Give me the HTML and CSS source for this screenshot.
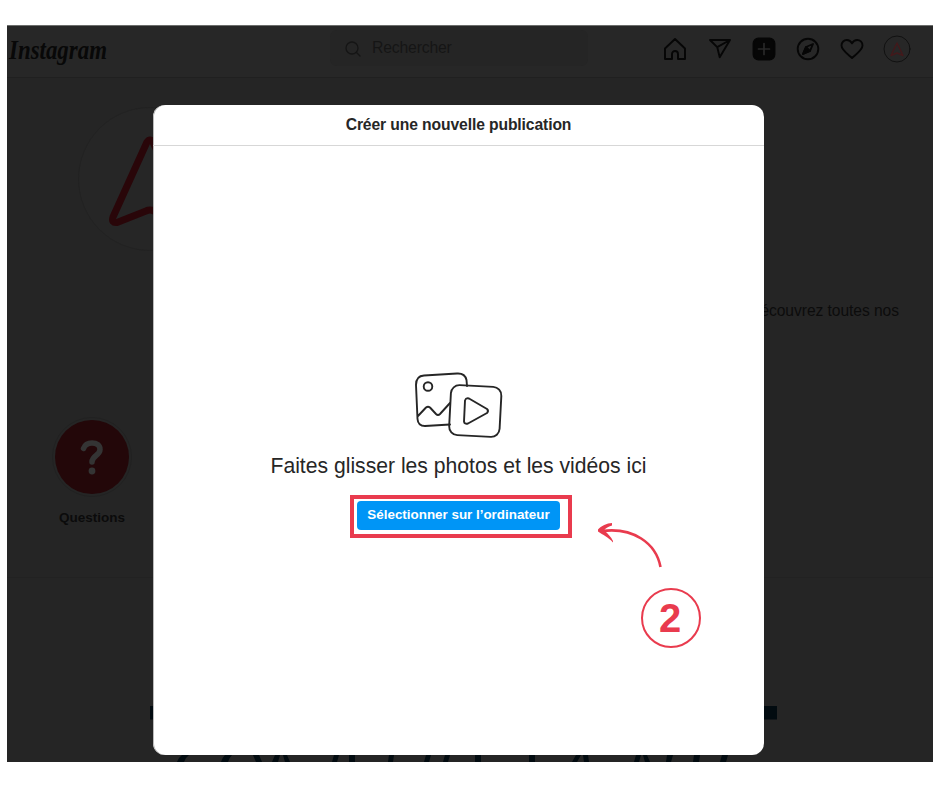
FILE: index.html
```html
<!DOCTYPE html>
<html lang="fr">
<head>
<meta charset="utf-8">
<title>Instagram</title>
<link rel="stylesheet" href="styles.css">
</head>
<body>
<div class="window">
  <header class="nav">
    <svg class="logo" width="102" height="38" viewBox="0 0 102 38"><text x="2" y="26" textLength="98" lengthAdjust="spacingAndGlyphs">Instagram</text></svg>
    <div class="search">
      <svg width="16" height="16" viewBox="0 0 16 16"><circle cx="7" cy="7" r="6"/><path d="M11.5 11.5 15 15"/></svg>
      <span>Rechercher</span>
    </div>
    <nav class="icons">
      <svg viewBox="0 0 24 24"><path d="M9 22v-5c0-1.700 1.300-3 3-3s3 1.300 3 3v5h7V11.500L12 2 2 11.500V22z"/></svg>
      <svg viewBox="0 0 24 24"><path d="M22 3 9.200 10.100M11.700 20.300 22 3H2l7.200 7.100z"/></svg>
      <svg viewBox="0 0 24 24"><rect class="fill" x="1.500" y="1.500" width="21" height="21" rx="5"/><path class="plus" d="M6.500 12h11M12 6.500v11"/></svg>
      <svg viewBox="0 0 24 24"><circle cx="12" cy="12" r="10.300"/><path d="m17 7-3 7-7 3 3-7z"/><path class="fill" d="m10 10 4 4-7 3z"/></svg>
      <svg viewBox="0 0 24 24"><path d="M12 21C9 18 1.500 13.500 1.500 8.600 1.500 5.200 4 3 6.900 3 9.500 3 11 4.500 12 6.300 13 4.500 14.500 3 17.100 3 20 3 22.500 5.200 22.500 8.600 22.500 13.500 15 18 12 21z"/></svg>
      <svg class="avatar" viewBox="0 0 28 28"><circle cx="14" cy="14" r="13"/><path d="m14 8 6 12.500-6-2.500-6 2.500z"/></svg>
    </nav>
  </header>
  <main class="profile">
    <svg class="portrait" width="144" height="144" viewBox="0 0 144 144"><circle cx="72" cy="72" r="71.500"/><path d="M69 35Q72 31 75 35L109 111Q110 117 104 116L76 104Q72 102 68 104L39 115.500Q33 116 35 110Z"/></svg>
    <p class="bio">écouvrez toutes nos</p>
    <div class="story">
      <div class="ring"><div class="disc"><svg width="24" height="36" viewBox="0 0 24 36"><path d="M3.500 9.500C5 5.500 8 4 12 4c5 0 8 2.500 8 6.500 0 6-8 6-8 12.500"/><circle cx="12" cy="32" r="3.400"/></svg></div></div>
      <span>Questions</span>
    </div>
    <div class="posts">
      <svg width="926" height="134" viewBox="7 628 926 134"><path d="M150 706h627v13.500H150zM182 755h7q-4 3-5 7h-7q1-4 5-7zM225 755h7q-3 3-4 7h-7q1-4 4-7zM253 755h6l3 7h-6zM275 755h5l-2 7h-6zM283 755h4l3 7h-5zM334 755h5l-2 7h-5zM349 755h6v7h-6zM389 755h5l-1 7h-5zM426 755h5l-2 7h-5zM445 755h5l-2 7h-5zM475 755h6v7h-6zM529 755h6v7h-6zM576 755h5l-4 7h-5zM583 755h5l1 7h-5zM636 755h5l-2 7h-5zM643 755h4l3 7h-5zM667 755h6l-2 7h-5zM694 755h6l-1 7h-6zM722 755h6l-2 7h-6z"/></svg>
    </div>
  </main>
  <section class="modal">
    <h1>Créer une nouvelle publication</h1>
    <div class="drop">
      <svg class="media" width="88" height="68" viewBox="0 0 88 68"><path d="M35 52.500 10 54Q3 54 2.500 47L1 13Q1 4 9 3.500L42 1.500Q50 1 51.500 8L52 14M3 44l8-8.500q2-1.500 4 0l6 6.500q2 2 4 0L35 31"/><circle cx="13" cy="14.500" r="4.300"/><rect x="35" y="14" width="50.500" height="50" rx="8.500" transform="rotate(3 60 39)"/><path d="M50 28.500Q51 25.500 54 26.500L72 37Q74 39 72 41L53 51.500Q49.500 52.500 49 49.500Z"/></svg>
      <h2>Faites glisser les photos et les vidéos ici</h2>
      <div class="frame"><button>Sélectionner sur l’ordinateur</button></div>
    </div>
    <svg class="arrow" width="70" height="50" viewBox="595 520 70 50"><path class="shaft" d="M602 531C633 527 656 543 660.500 567"/><path class="head" d="M598 529.500C601 526 607 523 612 523V525.500C608 526.500 605 528.500 604 530.500C608 533.500 611 537 613 541V542.500C608 537 603 535 598 531.500Z"/></svg>
    <div class="step">2</div>
  </section>
</div>
</body>
</html>
```
FILE: styles.css
```css
* { box-sizing: border-box; }
body { margin: 0; background: #fff; font-family: "Liberation Sans", Arial, sans-serif; }
.window { position: relative; width: 926px; height: 737px; margin: 25px 0 0 7px; background: #252525; overflow: hidden; border-top: 1px solid #6b6d6b; }
svg { fill: none; stroke-linecap: round; stroke-linejoin: round; flex: none; }
.nav { display: flex; height: 52px; background: #272727; border-bottom: 1px solid #202020; }
.logo { margin-top: 7px; overflow: visible; }
.logo text { font: italic bold 28px "Liberation Serif", serif; fill: #080808; }
.search { display: flex; align-items: center; gap: 11px; width: 258px; height: 36px; margin: 4px 0 0 221px; padding-left: 15px; border-radius: 7px; background: #252525; color: #151515; font-size: 15.800px; letter-spacing: -0.200px; }
.search svg { stroke: #151515; stroke-width: 1.300; margin-top: 1px; }
.icons { display: flex; align-items: center; gap: 20.300px; height: 46px; margin-left: 75.300px; }
.icons svg { width: 24px; height: 24px; stroke: #060606; stroke-width: 1.900; }
.icons .fill { fill: #060606; }
.icons .plus { stroke: #292929; stroke-width: 1.700; }
.icons .avatar { width: 28px; height: 28px; stroke: #111; stroke-width: 1; margin-left: -2px; }
.icons .avatar path { stroke: #43191b; stroke-width: 1.400; }
.profile { display: flex; flex-direction: column; }
.portrait { margin: 29px 0 0 71px; }
.portrait circle { stroke: #222; fill: #262626; }
.portrait path { stroke: #290609; stroke-width: 7; }
.bio { align-self: flex-end; margin: 50px 34px 0 0; font-size: 15.600px; letter-spacing: -0.050px; line-height: 20px; color: #0c0c0c; }
.story { display: flex; flex-direction: column; align-items: center; width: 170px; margin-top: 96px; gap: 13px; color: #0b0b0b; font-size: 13.500px; font-weight: bold; line-height: 16px; }
.ring { padding: 2px; border: 1px solid #212121; border-radius: 50%; }
.disc { display: flex; align-items: center; justify-content: center; width: 74px; height: 74px; border-radius: 50%; background: #230709; }
.disc path { stroke: #343434; stroke-width: 5.500; }
.disc circle { fill: #343434; }
.posts { height: 185px; margin-top: 51px; padding-top: 50px; border-top: 1px solid #222; }
.posts svg { display: block; fill: #020b10; }
.modal { position: absolute; left: 146px; top: 79px; width: 611px; height: 650px; border-radius: 12px; background: #fff; color: #262626; box-shadow: inset 1px 0 #bbb; }
.modal h1 { margin: 0; height: 41px; border-bottom: 1px solid #d7d7d7; text-align: center; font-size: 15.700px; letter-spacing: -0.120px; line-height: 40px; }
.drop { display: flex; flex-direction: column; align-items: center; padding-top: 226px; }
.media { stroke: #262626; stroke-width: 1.900; }
.drop h2 { margin: 12px 0 0; font-size: 21.150px; line-height: 28px; font-weight: normal; white-space: nowrap; }
.frame { width: 222px; height: 43px; margin: 15px 0 0 5px; padding: 2px 3px; border: 4px solid #e93b4e; }
.frame button { display: block; width: 203px; height: 29px; padding: 0 0 2px; border: 0; border-radius: 4px; background: #0095f6; color: #fff; font: bold 13.400px/27px "Liberation Sans", sans-serif; white-space: nowrap; }
.arrow { position: absolute; left: 442px; top: 415px; }
.shaft { stroke: #e93b4e; stroke-width: 2.600; stroke-linecap: butt; }
.head { fill: #e93b4e; }
.step { position: absolute; left: 488px; top: 483px; width: 60px; height: 60px; border: 2px solid #e93b4e; border-radius: 50%; color: #e93b4e; font-size: 40px; font-weight: bold; line-height: 57px; text-align: center; padding-right: 2px; }
```
